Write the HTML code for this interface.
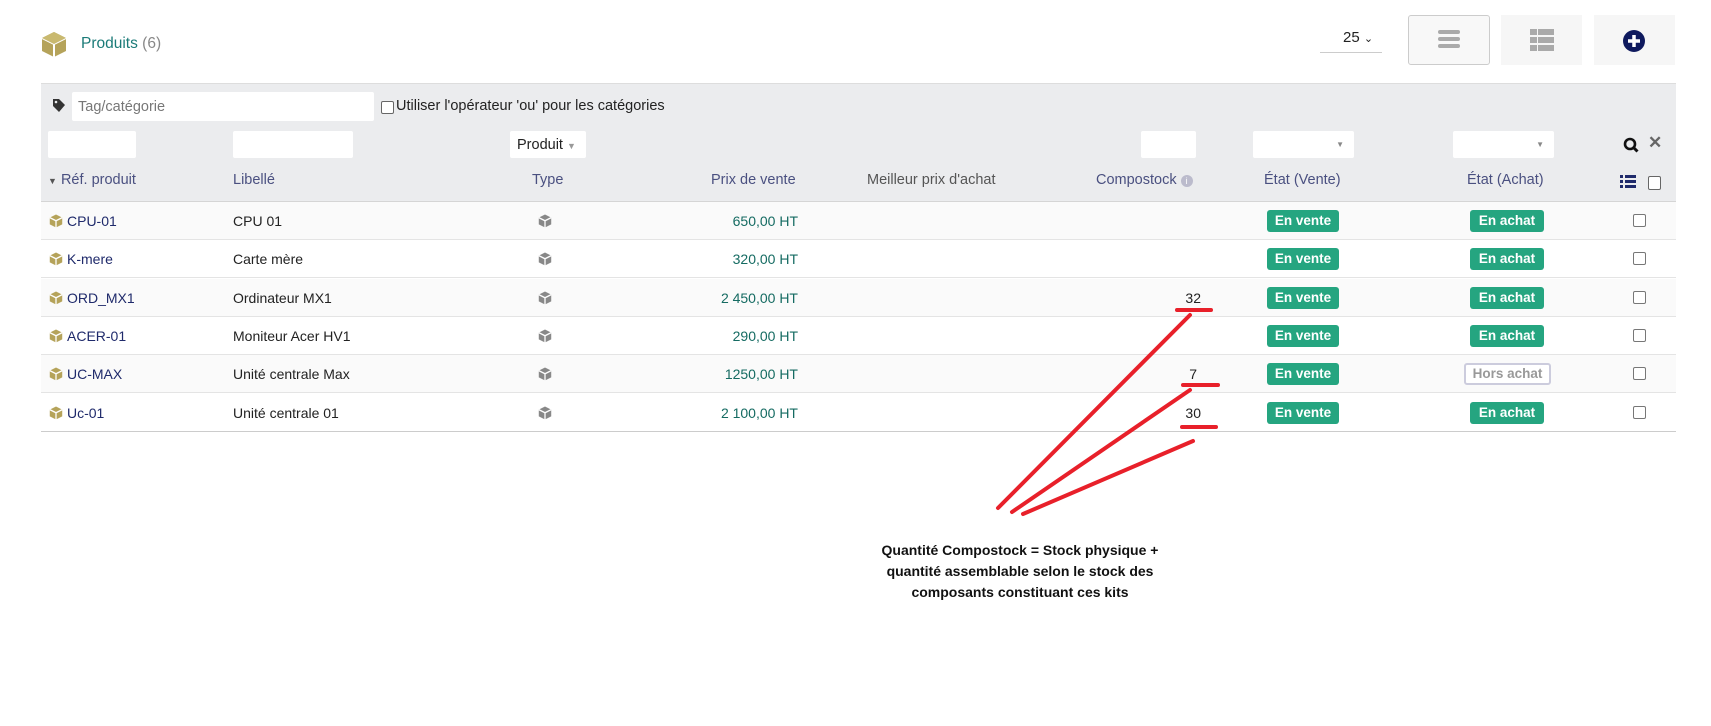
<!DOCTYPE html>
<html><head><meta charset="utf-8"><style>
*{box-sizing:border-box;margin:0;padding:0}
body{width:1711px;height:726px;background:#fff;font-family:"Liberation Sans",Arial,sans-serif;font-size:14px;color:#222;position:relative;overflow:hidden}
.a{position:absolute}
.inp{position:absolute;background:#fff;border-radius:2px;height:27px}
.row{position:absolute;left:41px;width:1635px;height:38px;border-bottom:1px solid #e4e4e4}
.c{position:absolute;top:0;height:38px;line-height:38px;white-space:nowrap}
.ref{color:#1f2a6b;left:8px}
.ref svg{vertical-align:-2px;margin-right:4px}
.lib{left:192px}
.typ{left:497px;top:12px}
.px{left:600px;width:157px;color:#156b62;text-align:right}
.cs{left:1100px;width:60px;text-align:right}
.b{position:absolute;top:8px;height:22px;line-height:22px;color:#fff;background:#25a580;border-radius:3px;font-weight:bold;font-size:13.5px;text-align:center}
.bv{left:1226px;width:72px}
.ba{left:1429px;width:74px}
.bh{left:1423px;width:87px;background:#fff;color:#999;border:2px solid #ccd;line-height:18px}
.cb{position:absolute;left:1592px;top:12px;width:13px;height:13px;border:1px solid #777;border-radius:2px;background:#fff}
.h{position:absolute;top:172px;color:#4a5080;font-size:14.5px}
</style></head><body>
<svg class="a" style="left:41px;top:31px" width="26" height="27" viewBox="0 0 26 27"><path d="M13 1 L25 7 L25 20 L13 26 L1 20 L1 7Z" fill="#b5a35a"/><path d="M13 13 L25 7 M13 13 L1 7 M13 13 L13 26" stroke="#fff" stroke-width="2" fill="none"/><path d="M13 1 L25 7 L13 13 L1 7Z" fill="#c9b96f"/></svg>
<div class="a" style="left:81px;top:35px;font-size:15.5px;color:#1b7b78">Produits <span style="color:#888">(6)</span></div>
<div class="a" style="left:1343px;top:29px;font-size:15px;color:#222">25 <span style="font-size:11px">⌄</span></div>
<div class="a" style="left:1320px;top:52px;width:62px;height:1px;background:#ccc"></div>
<div class="a" style="left:1408px;top:15px;width:82px;height:50px;border:1px solid #ccc;border-radius:3px;background:#f8f8f8"></div>
<div class="a" style="left:1438px;top:30px;width:22px;height:4px;background:#aaa;border-radius:2px;box-shadow:0 7px 0 #aaa,0 14px 0 #aaa"></div>
<div class="a" style="left:1501px;top:15px;width:81px;height:50px;background:#f6f6f6"></div>
<svg class="a" style="left:1530px;top:29px" width="24" height="22"><g fill="#aaa"><rect x="0" y="0" width="7" height="6"/><rect x="8" y="0" width="16" height="6"/><rect x="0" y="8" width="7" height="6"/><rect x="8" y="8" width="16" height="6"/><rect x="0" y="16" width="7" height="6"/><rect x="8" y="16" width="16" height="6"/></g></svg>
<div class="a" style="left:1594px;top:15px;width:81px;height:50px;background:#f6f6f6"></div>
<svg class="a" style="left:1622px;top:29px" width="24" height="24"><circle cx="12" cy="12" r="11" fill="#0f1a5e"/><path d="M12 6v12M6 12h12" stroke="#fff" stroke-width="3.5"/></svg>

<div class="a" style="left:41px;top:83px;width:1635px;height:119px;background:#ebecee;border-top:1px solid #ddd;border-bottom:1px solid #d5d5d5"></div>
<svg class="a" style="left:52px;top:98px" width="14" height="15"><path d="M1 1h6l6 6-6 7-6-6z" fill="#333"/><circle cx="4" cy="4" r="1.3" fill="#ebecee"/></svg>
<div class="inp" style="left:72px;top:92px;width:302px;height:29px;color:#777;padding:7px 6px;font-size:14.5px">Tag/catégorie</div>
<div class="a" style="left:381px;top:101px;width:13px;height:13px;border:1px solid #666;border-radius:2px;background:#fff"></div>
<div class="a" style="left:396px;top:98px;font-size:14.5px">Utiliser l'opérateur 'ou' pour les catégories</div>
<div class="inp" style="left:48px;top:131px;width:88px"></div>
<div class="inp" style="left:233px;top:131px;width:120px"></div>
<div class="inp" style="left:510px;top:131px;width:76px;padding:6px 7px;font-size:14.5px">Produit <span style="color:#999;font-size:9px">▼</span></div>
<div class="inp" style="left:1141px;top:131px;width:55px"></div>
<div class="inp" style="left:1253px;top:131px;width:101px"><span class="a" style="right:10px;top:9px;color:#888;font-size:8px">▼</span></div>
<div class="inp" style="left:1453px;top:131px;width:101px"><span class="a" style="right:10px;top:9px;color:#888;font-size:8px">▼</span></div>
<svg class="a" style="left:1623px;top:137px" width="18" height="16"><circle cx="7" cy="7" r="5" stroke="#111" stroke-width="2.6" fill="none"/><path d="M10.5 10.5l4 4" stroke="#111" stroke-width="3"/></svg>
<div class="a" style="left:1648px;top:133px;font-size:17px;font-weight:bold;color:#666">✕</div>
<div class="h" style="left:48px"><span style="font-size:9px;color:#555">▼</span> Réf. produit</div>
<div class="h" style="left:233px">Libellé</div>
<div class="h" style="left:532px">Type</div>
<div class="h" style="left:711px">Prix de vente</div>
<div class="h" style="left:867px;color:#555">Meilleur prix d'achat</div>
<div class="h" style="left:1096px">Compostock <span style="display:inline-block;width:12px;height:12px;border-radius:6px;background:#bbc;color:#fff;font-size:9px;text-align:center;line-height:12px;vertical-align:0">i</span></div>
<div class="h" style="left:1264px">État (Vente)</div>
<div class="h" style="left:1467px">État (Achat)</div>
<svg class="a" style="left:1620px;top:175px" width="16" height="13"><g fill="#1f2a6b"><rect x="0" y="0" width="3" height="3"/><rect x="5" y="0" width="11" height="3"/><rect x="0" y="5" width="3" height="3"/><rect x="5" y="5" width="11" height="3"/><rect x="0" y="10" width="3" height="3"/><rect x="5" y="10" width="11" height="3"/></g></svg>
<div class="a" style="left:1648px;top:176px;width:13px;height:14px;border:1px solid #666;border-radius:2px;background:#fff"></div>

<svg width="0" height="0" style="position:absolute"><defs><symbol id="cube" viewBox="0 0 26 27"><path d="M13 1 L25 7 L25 20 L13 26 L1 20 L1 7Z"/><path d="M13 13 L25 7 M13 13 L1 7 M13 13 L13 26" stroke="#fff" stroke-width="2.5" fill="none"/></symbol></defs></svg>

<div class="row" style="top:202px;background:#fafafa"><div class="c ref"><svg width="14" height="14" fill="#b5a35a"><use href="#cube"/></svg>CPU-01</div><div class="c lib">CPU 01</div><svg class="a typ" width="14" height="14" fill="#888"><use href="#cube"/></svg><div class="c px">650,00 HT</div><div class="b bv">En vente</div><div class="b ba">En achat</div><div class="cb"></div></div>
<div class="row" style="top:240px"><div class="c ref"><svg width="14" height="14" fill="#b5a35a"><use href="#cube"/></svg>K-mere</div><div class="c lib">Carte mère</div><svg class="a typ" width="14" height="14" fill="#888"><use href="#cube"/></svg><div class="c px">320,00 HT</div><div class="b bv">En vente</div><div class="b ba">En achat</div><div class="cb"></div></div>
<div class="row" style="top:279px;background:#fafafa"><div class="c ref"><svg width="14" height="14" fill="#b5a35a"><use href="#cube"/></svg>ORD_MX1</div><div class="c lib">Ordinateur MX1</div><svg class="a typ" width="14" height="14" fill="#888"><use href="#cube"/></svg><div class="c px">2 450,00 HT</div><div class="c cs">32</div><div class="b bv">En vente</div><div class="b ba">En achat</div><div class="cb"></div></div>
<div class="row" style="top:317px"><div class="c ref"><svg width="14" height="14" fill="#b5a35a"><use href="#cube"/></svg>ACER-01</div><div class="c lib">Moniteur Acer HV1</div><svg class="a typ" width="14" height="14" fill="#888"><use href="#cube"/></svg><div class="c px">290,00 HT</div><div class="b bv">En vente</div><div class="b ba">En achat</div><div class="cb"></div></div>
<div class="row" style="top:355px;background:#fafafa"><div class="c ref"><svg width="14" height="14" fill="#b5a35a"><use href="#cube"/></svg>UC-MAX</div><div class="c lib">Unité centrale Max</div><svg class="a typ" width="14" height="14" fill="#888"><use href="#cube"/></svg><div class="c px">1250,00 HT</div><div class="c cs" style="left:1096px">7</div><div class="b bv">En vente</div><div class="b bh">Hors achat</div><div class="cb"></div></div>
<div class="row" style="top:394px;border-bottom-color:#ccc"><div class="c ref"><svg width="14" height="14" fill="#b5a35a"><use href="#cube"/></svg>Uc-01</div><div class="c lib">Unité centrale 01</div><svg class="a typ" width="14" height="14" fill="#888"><use href="#cube"/></svg><div class="c px">2 100,00 HT</div><div class="c cs">30</div><div class="b bv">En vente</div><div class="b ba">En achat</div><div class="cb"></div></div>

<svg class="a" style="left:0;top:0" width="1711" height="726"><g stroke="#e8202a" stroke-width="4" stroke-linecap="round" fill="none">
<path d="M1177 310H1211"/><path d="M1183 385H1218"/><path d="M1182 427H1216"/>
<path d="M1190 315L998 508"/><path d="M1190 390L1012 512"/><path d="M1193 441L1023 514"/></g></svg>
<div class="a" style="left:840px;top:540px;width:360px;text-align:center;font-weight:bold;font-size:14px;line-height:21px;color:#111">Quantité Compostock = Stock physique +<br>quantité assemblable selon le stock des<br>composants constituant ces kits</div>
</body></html>
